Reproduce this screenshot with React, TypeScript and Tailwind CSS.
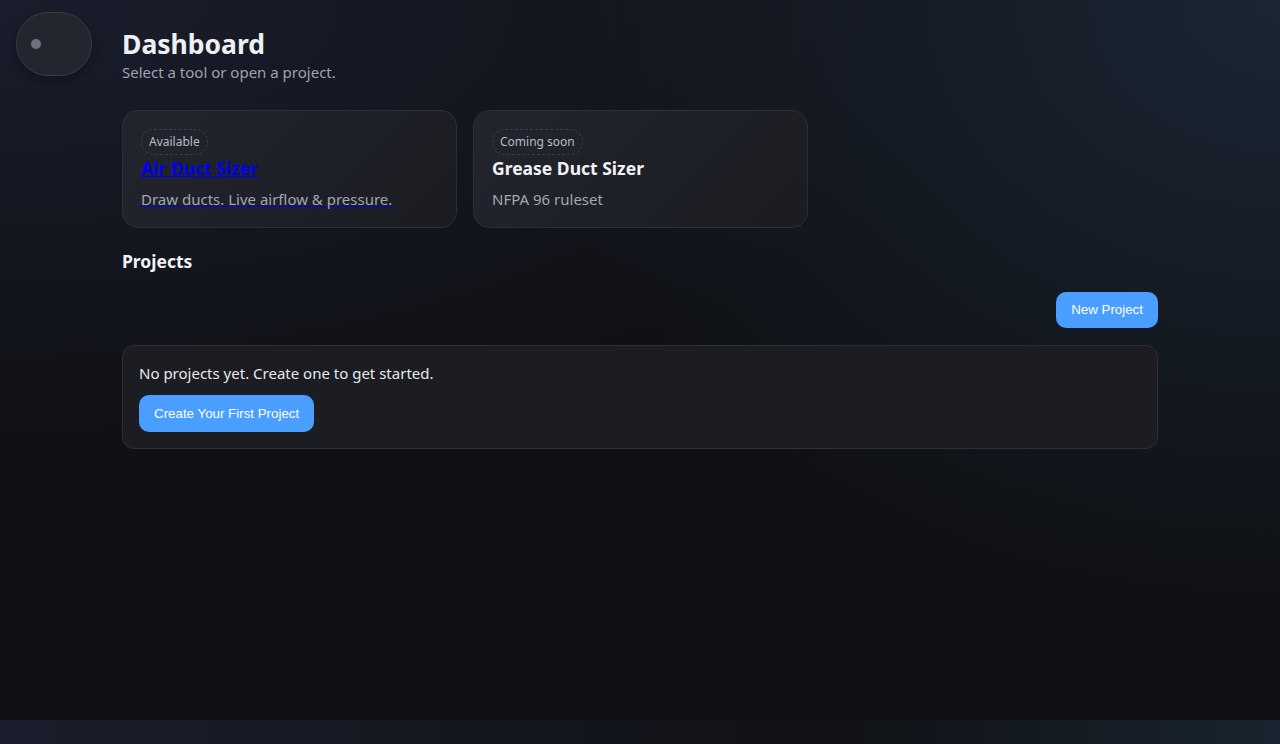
import React from "react";

const font = "font-['Noto_Sans','Open_Sans',sans-serif]";
const btnFont = "font-['Liberation_Sans',Arial,sans-serif]";

const ToolCard = ({
  badge,
  title,
  desc,
  href,
}: {
  badge: string;
  title: string;
  desc: string;
  href?: string;
}) => {
  const body = (
    <>
      <span className="flex w-fit h-[26px] items-center rounded-full border border-dashed border-[#3a3d46] px-[7px] text-[12px] leading-[16px] text-[#b9bcc4] no-underline">
        {badge}
      </span>
      <h3
        className={
          href
            ? "text-[17.5px] font-bold leading-[26px] text-[#0000ee] underline decoration-[#0000ee]"
            : "text-[17.5px] font-bold leading-[26px] text-[#f2f3f5]"
        }
      >
        {title}
      </h3>
      <p
        className={
          href
            ? "mt-[8px] text-[15px] leading-[20px] text-[#a3a7b0] underline decoration-[#0000ee]"
            : "mt-[8px] text-[15px] leading-[20px] text-[#a3a7b0]"
        }
      >
        {desc}
      </p>
    </>
  );
  return (
    <div className="w-[335px] h-[118px] rounded-[16px] border border-[#2c2f36] bg-[linear-gradient(135deg,#22252e,#1a1c21)] px-[18px] pt-[18px]">
      {href ? (
        <a href={href} className="block">
          {body}
        </a>
      ) : (
        body
      )}
    </div>
  );
};

export default function App() {
  return (
    <div className={`min-h-screen bg-[linear-gradient(90deg,#1b1d2c,#101216_65%,#18242f)] ${font}`}>
      <div className="h-[720px] flex bg-[#0f1115] bg-[image:radial-gradient(1000px_440px_at_0%_0%,#1a1d2c,transparent),radial-gradient(760px_600px_at_100%_0%,#1a2634,transparent)]">
        <aside className="w-[122px] shrink-0 pl-4 pt-3">
          <button className="w-[76px] h-[64px] rounded-[32px] border border-[#3a3d47] bg-[#23262f] flex items-center pl-[14px] shadow-[0_4px_12px_rgba(0,0,0,0.3)]">
            <span className="w-[10px] h-[10px] rounded-full bg-[#6f737d]" />
          </button>
        </aside>
        <main className="w-[1036px] pt-[27px]">
          <h1 className="text-[26.5px] font-bold leading-[34px] text-[#eef0f4]">Dashboard</h1>
          <p className="mt-[1px] text-[15px] leading-[20px] text-[#9ea3ae]">Select a tool or open a project.</p>

          <div className="mt-[28px] flex gap-4">
            <ToolCard
              badge="Available"
              title="Air Duct Sizer"
              desc="Draw ducts. Live airflow & pressure."
              href="#"
            />
            <ToolCard badge="Coming soon" title="Grease Duct Sizer" desc="NFPA 96 ruleset" />
          </div>

          <h2 className="mt-[21px] text-[17.5px] font-bold leading-[24px] text-[#f2f3f5]">Projects</h2>

          <div className="mt-[19px] flex justify-end">
            <button className={`h-[36px] px-[15px] rounded-[10px] bg-[#4a9eff] text-[13.33px] text-white ${btnFont}`}>
              New Project
            </button>
          </div>

          <div className="mt-[17px] rounded-[12px] border border-[#2c2f36] bg-[#1c1d22] px-[16px] pt-[17px] pb-[16px]">
            <p className="text-[15px] leading-[20px] text-[#e8e9ec]">No projects yet. Create one to get started.</p>
            <button className={`mt-[12px] h-[37px] px-[15px] rounded-[10px] bg-[#4a9eff] text-[13.33px] text-white ${btnFont}`}>
              Create Your First Project
            </button>
          </div>
        </main>
      </div>
    </div>
  );
}
